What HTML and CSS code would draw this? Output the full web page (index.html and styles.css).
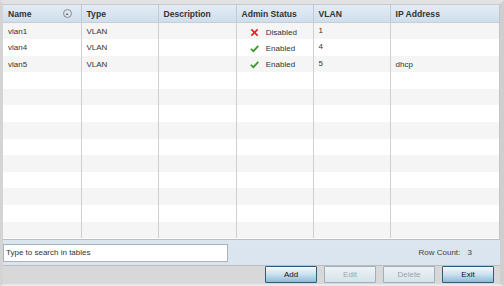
FILE: index.html
```html
<!DOCTYPE html>
<html lang="en">
<head>
    <meta charset="UTF-8">
    <title>VLAN Interfaces</title>
    <link rel="stylesheet" href="styles.css">
</head>
<body>
    <div class="frame">
        <div class="grid-wrap">
            <table class="grid">
                <colgroup>
                    <col style="width:78px"><col style="width:77px"><col style="width:78px">
                    <col style="width:77px"><col style="width:77px"><col>
                </colgroup>
                <thead>
                    <tr>
                        <th>Name <span class="sort">&#9650;</span></th>
                        <th>Type</th>
                        <th>Description</th>
                        <th>Admin Status</th>
                        <th>VLAN</th>
                        <th>IP Address</th>
                    </tr>
                </thead>
                <tbody>
                    <tr>
                        <td>vlan1</td><td>VLAN</td><td></td>
                        <td class="status">
                            <svg class="ico" viewBox="0 0 10 10"><path d="M1.5 1.5 L8.5 8.5 M8.5 1.5 L1.5 8.5" stroke="#e02424" stroke-width="1.8"/></svg>
                            Disabled
                        </td>
                        <td class="num">1</td><td></td>
                    </tr>
                    <tr>
                        <td>vlan4</td><td>VLAN</td><td></td>
                        <td class="status">
                            <svg class="ico" viewBox="0 0 10 10"><path d="M1 5.5 L3.8 8 L9.2 2.2" fill="none" stroke="#3a9a2a" stroke-width="2"/></svg>
                            Enabled
                        </td>
                        <td class="num">4</td><td></td>
                    </tr>
                    <tr>
                        <td>vlan5</td><td>VLAN</td><td></td>
                        <td class="status">
                            <svg class="ico" viewBox="0 0 10 10"><path d="M1 5.5 L3.8 8 L9.2 2.2" fill="none" stroke="#3a9a2a" stroke-width="2"/></svg>
                            Enabled
                        </td>
                        <td class="num">5</td><td>dhcp</td>
                    </tr>
                    <tr><td></td><td></td><td></td><td></td><td></td><td></td></tr>
                    <tr><td></td><td></td><td></td><td></td><td></td><td></td></tr>
                    <tr><td></td><td></td><td></td><td></td><td></td><td></td></tr>
                    <tr><td></td><td></td><td></td><td></td><td></td><td></td></tr>
                    <tr><td></td><td></td><td></td><td></td><td></td><td></td></tr>
                    <tr><td></td><td></td><td></td><td></td><td></td><td></td></tr>
                    <tr><td></td><td></td><td></td><td></td><td></td><td></td></tr>
                    <tr><td></td><td></td><td></td><td></td><td></td><td></td></tr>
                    <tr><td></td><td></td><td></td><td></td><td></td><td></td></tr>
                    <tr><td></td><td></td><td></td><td></td><td></td><td></td></tr>
                </tbody>
            </table>
        </div>

        <div class="search-bar">
            <input class="search" type="text" value="Type to search in tables">
            <div class="row-count">Row Count: <span>3</span></div>
        </div>

        <div class="button-bar">
            <button class="btn">Add</button>
            <button class="btn" disabled>Edit</button>
            <button class="btn" disabled>Delete</button>
            <button class="btn">Exit</button>
        </div>
    </div>
</body>
</html>
```

FILE: styles.css
```css
body {
    margin: 0;
    background: #ffffff;
    font-family: "Liberation Sans", Arial, sans-serif;
    font-size: 8px;
    color: #222222;
}
.frame {
    width: 504px;
    height: 286px;
    box-sizing: border-box;
    background: linear-gradient(#e9eef4, #d9e4ef);
    border-top: 4px solid #e2e2e2;
    border-left: 3px solid #d4d4d4;
    border-right: 4px solid #cfcfcf;
    border-bottom: 2px solid #e6ebf0;
    display: flex;
    flex-direction: column;
}
.grid-wrap {
    height: 235px;
    background: #ffffff;
    border-top: 1px solid #c9c9c9;
    border-right: 1px solid #c4c4c4;
    border-bottom: 1px solid #bdbdbd;
    overflow: hidden;
}
.grid {
    width: 100%;
    border-collapse: collapse;
    table-layout: fixed;
}
.grid th {
    height: 17px;
    padding: 0 5px;
    text-align: left;
    font-weight: bold;
    font-size: 8.6px;
    color: #333333;
    background: linear-gradient(#e3ecf6, #cfdeec);
    border-right: 1px solid #c2cbd4;
    border-bottom: 1px solid #c5cdd5;
}
.grid th:last-child,
.grid td:last-child {
    border-right: none;
}
.sort {
    float: right;
    width: 7px;
    height: 7px;
    border: 1px solid #8a8a8a;
    border-radius: 50%;
    font-size: 4px;
    line-height: 7px;
    text-align: center;
    color: #666666;
    margin-right: 4px;
}
.grid td {
    height: 16.6px;
    padding: 0 5px;
    padding-top: 1px;
    box-sizing: border-box;
    vertical-align: middle;
    color: #333333;
    border-right: 1px solid #cfcfcf;
    white-space: nowrap;
}
.grid td.num {
    vertical-align: top;
    padding-top: 3px;
}
.grid tbody tr:nth-child(odd) td {
    background: #f5f5f5;
}
.grid td.status {
    padding-left: 13px;
    padding-top: 2px;
}
.ico {
    width: 9px;
    height: 9px;
    vertical-align: -2px;
    margin-right: 5px;
}
.search-bar {
    height: 25px;
    display: flex;
    align-items: center;
    justify-content: space-between;
    padding-right: 28px;
}
.search {
    width: 225px;
    height: 18px;
    box-sizing: border-box;
    margin: 0;
    padding: 0 2px;
    border: 1px solid #a9b3bd;
    border-radius: 0;
    background: #ffffff;
    font-family: "Liberation Sans", Arial, sans-serif;
    font-size: 8px;
    color: #333333;
}
.row-count {
    color: #444444;
    font-size: 8px;
}
.row-count span {
    margin-left: 5px;
}
.button-bar {
    flex: 1;
    background: #d8d8d8;
    border-top: 1px solid #bdbdbd;
    display: flex;
    justify-content: flex-end;
    align-items: center;
    gap: 7px;
    padding-right: 6px;
    padding-bottom: 1px;
}
.btn {
    width: 52px;
    height: 17px;
    padding: 0;
    border: 1px solid #2f5d78;
    border-radius: 1px;
    background: linear-gradient(#f4f9fc, #c9e0ee 50%, #8fbcd6);
    font-family: "Liberation Sans", Arial, sans-serif;
    font-size: 8px;
    color: #111111;
}
.btn:disabled {
    border-color: #9eb0bb;
    background: linear-gradient(#eef3f6, #d6e2e9);
    color: #9aa4ab;
}
```
